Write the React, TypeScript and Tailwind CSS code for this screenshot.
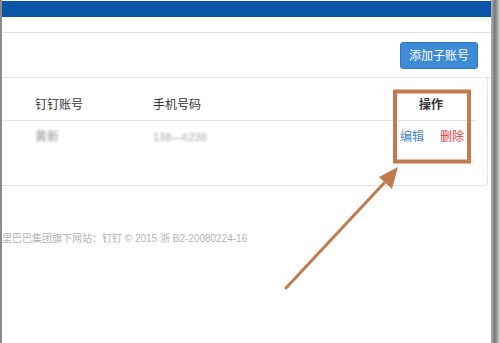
import React from "react";

const FONT = "font-['Liberation_Sans','Noto_Sans_CJK_SC',sans-serif]";

function Annotation() {
  // 截图上的标注：橙色框 + 箭头
  return (
    <svg className="pointer-events-none absolute inset-0" width="500" height="343" viewBox="0 0 500 343">
      <rect x="395" y="91.5" width="74" height="70" fill="none" stroke="#c27b4e" strokeWidth="4" />
      <line x1="286" y1="288" x2="386" y2="181" stroke="#c27b4e" strokeWidth="3" strokeLinecap="round" />
      <polygon points="398,167 379,177 392,189" fill="#c27b4e" />
    </svg>
  );
}

export default function App() {
  return (
    <div className={`relative flex h-[343px] w-[500px] overflow-hidden bg-white ${FONT}`}>
      {/* left edge */}
      <div className="w-[2px] bg-[#8a8a8a]" />

      <div className="flex flex-1 flex-col">
        {/* top bar */}
        <div className="mt-[1px] h-[16px] bg-[#0b55a8]" />
        <div className="h-[16px] border-b border-[#e3e3e3]" />

        {/* toolbar */}
        <div className="flex h-[45px] items-start justify-end border-b border-[#e3e3e3] pr-[13px] pt-[9px]">
          <button className="h-[27px] w-[78px] rounded-[3px] border border-[#2f78c4] bg-[#3d8ad6] text-[12px] text-white">
            添加子账号
          </button>
        </div>

        {/* table card */}
        <div className="mr-[3px] h-[108px] rounded-br-[4px] border-r border-b border-[#e3e3e3]">
          <div className="mr-[10px] flex h-[43px] items-end border-b border-[#e6e6e6] pb-[6px] text-[12px] text-[#333]">
            <div className="w-[151px] pl-[33px]">钉钉账号</div>
            <div className="flex-1">手机号码</div>
            <div className="w-[90px] pl-[32px] font-bold">操作</div>
          </div>
          <div className="mr-[10px] flex pt-[7px] text-[12px]">
            <div className="w-[151px] pl-[33px]">
              <span className="text-[#9a9a9a] blur-[1.3px]">黄新</span>
            </div>
            <div className="flex-1">
              <span className="text-[11px] text-[#a8a8a8] blur-[1.3px]">138—6238</span>
            </div>
            <div className="flex w-[90px] gap-[16px] pl-[13px]">
              <span className="text-[#4a86c5]">编辑</span>
              <span className="text-[#e23a42]">删除</span>
            </div>
          </div>
        </div>

        {/* footer */}
        <div className="mt-[45px] whitespace-nowrap text-[10px] text-[#b4b4b4]">
          里巴巴集团旗下网站：钉钉 © 2015 浙 B2-20080224-16
        </div>
      </div>

      {/* right shadow */}
      <div className="w-[9px] bg-[linear-gradient(to_right,#b5b5b5,#7a7a7a_40%,#a0a0a0_70%,#d8d8d8)]" />

      <Annotation />
    </div>
  );
}
